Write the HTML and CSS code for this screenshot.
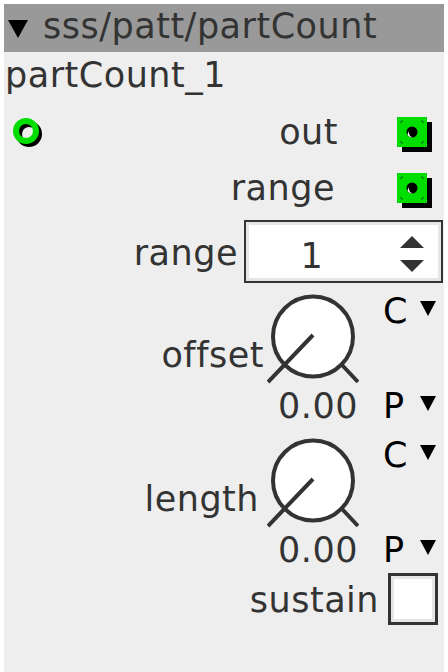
FILE: index.html
```html
<!DOCTYPE html>
<html>
<head>
<meta charset="utf-8">
<link rel="stylesheet" href="styles.css">
</head>
<body>
<div class="node">
  <div class="hdr"><svg class="hdr-tri" width="20" height="18" viewBox="0 0 20 18"><path d="M0 0H20L10 18Z" fill="#000"/></svg><span class="hdr-txt">sss/patt/partCount</span></div>
  <div class="inst">partCount_1</div>

  <div class="row row-out">
    <svg class="inlet" width="36" height="36" viewBox="0 0 36 36">
      <circle cx="17" cy="17" r="10" fill="none" stroke="#000" stroke-width="6"/>
      <circle cx="14" cy="14" r="10" fill="none" stroke="#00dd00" stroke-width="6"/>
    </svg>
    <span class="lbl lbl-out">out</span>
    <svg class="outlet" width="36" height="36" viewBox="0 0 36 36">
      <rect x="5" y="5" width="30" height="30" fill="#000"/>
      <rect x="0" y="0" width="30" height="30" fill="#00dd00"/>
      <path d="M4 6V4H6M24 4H26V6M26 24V26H24M6 26H4V24" fill="none" stroke="#063" stroke-width="1"/>
      <circle cx="15" cy="15" r="5.5" fill="#000"/>
      <path d="M10.5 17.5A5 5 0 0 0 15.5 20.5A6 6 0 0 1 12 14Z" fill="#fff"/>
    </svg>
  </div>

  <div class="row row-range">
    <span class="lbl lbl-range">range</span>
    <svg class="outlet" width="36" height="36" viewBox="0 0 36 36">
      <rect x="5" y="5" width="30" height="30" fill="#000"/>
      <rect x="0" y="0" width="30" height="30" fill="#00dd00"/>
      <path d="M4 6V4H6M24 4H26V6M26 24V26H24M6 26H4V24" fill="none" stroke="#063" stroke-width="1"/>
      <circle cx="15" cy="15" r="5.5" fill="#000"/>
      <path d="M10.5 17.5A5 5 0 0 0 15.5 20.5A6 6 0 0 1 12 14Z" fill="#fff"/>
    </svg>
  </div>

  <div class="row row-num">
    <span class="lbl lbl-num">range</span>
    <div class="numbox">
      <span class="num">1</span>
      <svg class="arrows" width="24" height="36" viewBox="0 0 24 36">
        <path d="M0 12L12 0L24 12Z" fill="#333"/>
        <path d="M0 24H24L12 36Z" fill="#333"/>
      </svg>
    </div>
  </div>

  <div class="knobrow">
    <span class="lbl lbl-knob">offset</span>
    <div class="knobcol">
      <svg class="knob" width="92" height="92" viewBox="0 0 92 92">
        <circle cx="46" cy="42.5" r="40" fill="#fff" stroke="#333" stroke-width="4"/>
        <path d="M46 41L1 88M75 71L91 88" stroke="#333" stroke-width="4" fill="none"/>
      </svg>
      <span class="val">0.00</span>
    </div>
    <div class="cp">
      <div class="cpline"><span>C</span><svg width="16" height="15" viewBox="0 0 16 15"><path d="M0 0H16L8 15Z" fill="#000"/></svg></div>
      <div class="cpline cpline-p"><span>P</span><svg width="16" height="15" viewBox="0 0 16 15"><path d="M0 0H16L8 15Z" fill="#000"/></svg></div>
    </div>
  </div>

  <div class="knobrow knobrow-2">
    <span class="lbl lbl-knob lbl-length">length</span>
    <div class="knobcol">
      <svg class="knob" width="92" height="92" viewBox="0 0 92 92">
        <circle cx="46" cy="42.5" r="40" fill="#fff" stroke="#333" stroke-width="4"/>
        <path d="M46 41L1 88M75 71L91 88" stroke="#333" stroke-width="4" fill="none"/>
      </svg>
      <span class="val">0.00</span>
    </div>
    <div class="cp">
      <div class="cpline"><span>C</span><svg width="16" height="15" viewBox="0 0 16 15"><path d="M0 0H16L8 15Z" fill="#000"/></svg></div>
      <div class="cpline cpline-p"><span>P</span><svg width="16" height="15" viewBox="0 0 16 15"><path d="M0 0H16L8 15Z" fill="#000"/></svg></div>
    </div>
  </div>

  <div class="row row-sus">
    <span class="lbl lbl-sus">sustain</span>
    <span class="chk"></span>
  </div>
</div>
</body>
</html>
```

FILE: styles.css
```css
html, body {
  margin: 0;
  padding: 0;
  background: #fff;
}
body {
  padding: 4px;
  font-family: "DejaVu Sans", sans-serif;
  font-size: 35px;
  letter-spacing: 0.5px;
  color: #333;
}
.node {
  width: 440px;
  height: 668px;
  background: #eee;
  overflow: hidden;
}
.hdr {
  height: 48px;
  background: #999;
  display: flex;
  align-items: flex-start;
  white-space: nowrap;
}
.hdr-tri {
  margin-left: 4px;
  margin-right: 15px;
  margin-top: 16px;
  flex: none;
}
.hdr-txt {
  line-height: 40px;
  margin-top: 2px;
}
.inst {
  height: 44px;
  padding-top: 3px;
  box-sizing: border-box;
  line-height: 40px;
  padding-left: 1px;
}
.row {
  display: flex;
  align-items: flex-start;
  justify-content: flex-end;
  line-height: 40px;
}
.row-out {
  margin-top: 16px;
  height: 56px;
  padding-right: 11px;
}
.row-range {
  height: 52px;
  padding-right: 11px;
}
.inlet {
  margin-top: 5px;
  margin-left: 8px;
  margin-right: auto;
}
.lbl-out {
  margin-right: 59px;
}
.lbl-range {
  margin-right: 62px;
}
.outlet {
  margin-top: 5px;
  flex: none;
}
.row-num {
  height: 63px;
  padding-right: 1px;
}
.lbl-num {
  margin-top: 13px;
  margin-right: 6px;
}
.numbox {
  width: 199px;
  height: 63px;
  box-sizing: border-box;
  border: 2px solid #333;
  background: #fff;
  box-shadow: inset 0 0 0 3px #e6e6e6;
  display: flex;
  align-items: flex-start;
}
.num {
  flex: 1;
  text-align: center;
  line-height: 40px;
  padding-top: 14px;
  padding-right: 22px;
}
.arrows {
  margin-top: 14px;
  margin-right: 17px;
}
.knobrow {
  display: flex;
  align-items: flex-start;
  justify-content: flex-end;
  padding-right: 8px;
  margin-top: 8px;
  height: 136px;
  line-height: 40px;
}
.lbl-knob {
  margin-top: 44px;
  margin-right: 3px;
}
.lbl-length {
  margin-right: 8px;
}
.knobcol {
  width: 92px;
  display: flex;
  flex-direction: column;
}
.knob {
  margin-top: 3px;
  display: block;
}
.val {
  text-align: right;
  padding-right: 1px;
}
.cp {
  width: 53px;
  margin-left: 24px;
  display: flex;
  flex-direction: column;
  color: #000;
}
.cpline {
  display: flex;
  justify-content: space-between;
  align-items: center;
  height: 40px;
}
.cpline svg {
  margin-top: -6px;
}
.cpline-p {
  margin-top: 55px;
}
.row-sus {
  margin-top: 2px;
  padding-right: 6px;
}
.lbl-sus {
  margin-top: 7px;
  margin-right: 9px;
}
.chk {
  width: 50px;
  height: 52px;
  box-sizing: border-box;
  border: 3px solid #333;
  background: #fff;
  box-shadow: inset 0 0 0 3px #e6e6e6;
}
```
